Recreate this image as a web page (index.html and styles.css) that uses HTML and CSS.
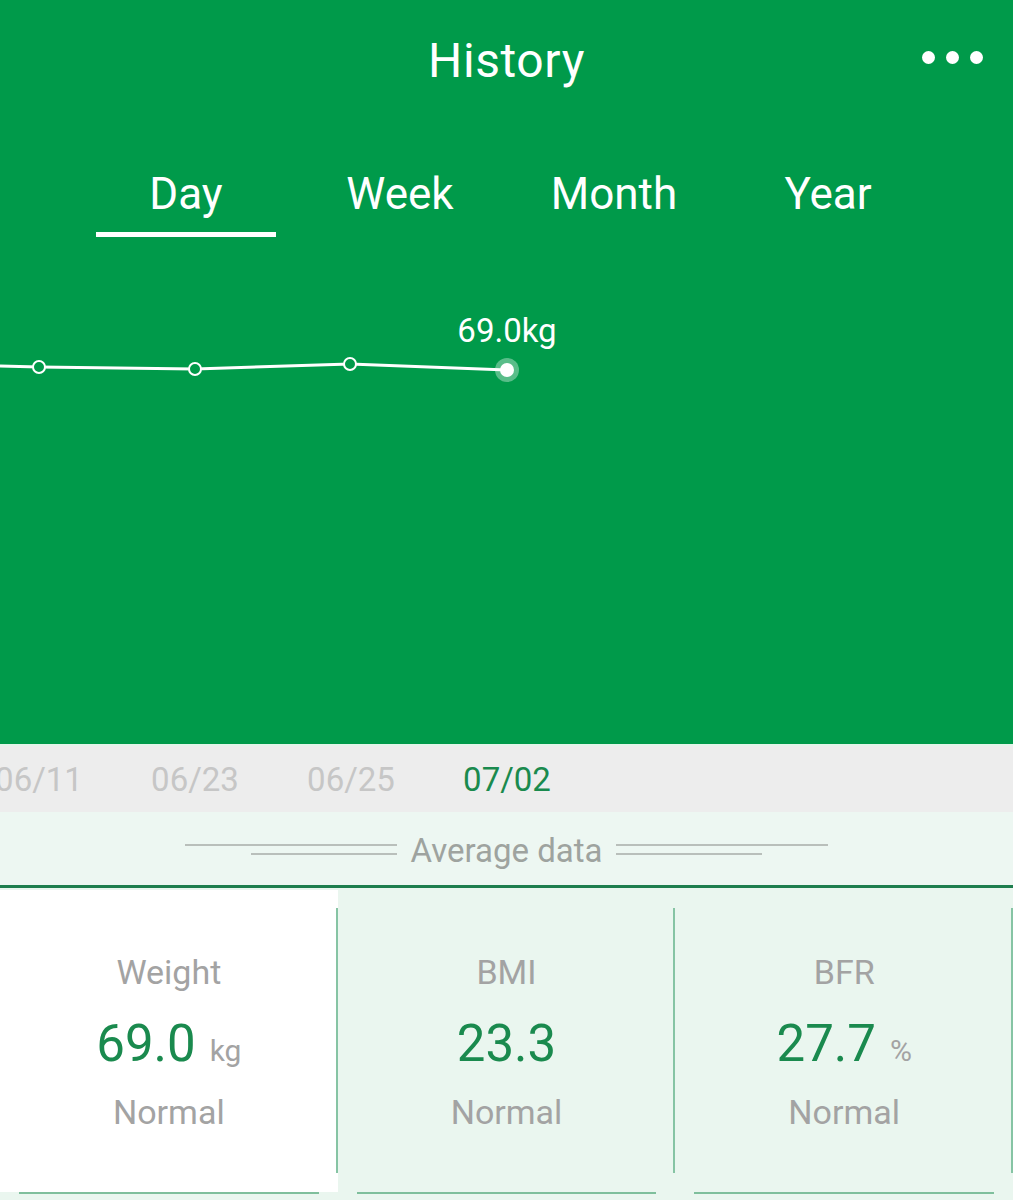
FILE: index.html
```html
<!DOCTYPE html>
<html>
<head>
<meta charset="utf-8">
<link rel="stylesheet" href="styles.css">
</head>
<body>
<div class="app">
  <header class="hero">
    <div class="titlebar">
      <h1 class="title">History</h1>
      <div class="more"><span></span><span></span><span></span></div>
    </div>
    <nav class="tabs">
      <div class="tab active"><span class="tab-label">Day</span><span class="tab-bar"></span></div>
      <div class="tab"><span class="tab-label">Week</span><span class="tab-bar"></span></div>
      <div class="tab"><span class="tab-label">Month</span><span class="tab-bar"></span></div>
      <div class="tab"><span class="tab-label">Year</span><span class="tab-bar"></span></div>
    </nav>
    <svg class="chart" width="1013" height="507" viewBox="0 0 1013 507">
      <polyline points="0,129 39,130 195,132 350,127 507,133" fill="none" stroke="#ffffff" stroke-width="3"/>
      <circle cx="39" cy="130" r="6" fill="#009a4a" stroke="#ffffff" stroke-width="2"/>
      <circle cx="195" cy="132" r="6" fill="#009a4a" stroke="#ffffff" stroke-width="2"/>
      <circle cx="350" cy="127" r="6" fill="#009a4a" stroke="#ffffff" stroke-width="2"/>
      <circle cx="507" cy="133" r="12" fill="#ffffff" fill-opacity="0.35"/>
      <circle cx="507" cy="133" r="7" fill="#ffffff"/>
      <text x="507" y="105" text-anchor="middle" class="chart-label">69.0kg</text>
    </svg>
  </header>
  <div class="dates">
    <span class="date">06/11</span>
    <span class="date">06/23</span>
    <span class="date">06/25</span>
    <span class="date current">07/02</span>
  </div>
  <div class="avg">
    <div class="rule left"><i class="long"></i><i class="short"></i></div>
    <span class="avg-label">Average data</span>
    <div class="rule right"><i class="long"></i><i class="short"></i></div>
  </div>
  <section class="cards">
    <div class="card selected">
      <div class="card-name">Weight</div>
      <div class="card-value">69.0<span class="unit">kg</span></div>
      <div class="card-status">Normal</div>
    </div>
    <div class="card">
      <div class="card-name">BMI</div>
      <div class="card-value">23.3</div>
      <div class="card-status">Normal</div>
    </div>
    <div class="card">
      <div class="card-name">BFR</div>
      <div class="card-value">27.7<span class="unit">%</span></div>
      <div class="card-status">Normal</div>
    </div>
  </section>
</div>
</body>
</html>
```

FILE: styles.css
```css
* { box-sizing: border-box; }
html, body { margin: 0; padding: 0; }
body {
  width: 1013px;
  height: 1200px;
  overflow: hidden;
  font-family: Roboto, "Noto Sans", "Liberation Sans", sans-serif;
  background: #eaf6ef;
}
.app { width: 1013px; }

.hero {
  background: #009a4a;
  height: 744px;
  position: relative;
}
.titlebar {
  height: 122px;
  display: flex;
  justify-content: center;
  align-items: center;
  position: relative;
}
.title {
  margin: 0;
  font-weight: 400;
  font-size: 48px;
  letter-spacing: 0.6px;
  color: #ffffff;
  line-height: 122px;
}
.more {
  position: absolute;
  right: 30px;
  top: 51px;
  display: flex;
  gap: 11px;
}
.more span {
  width: 13px;
  height: 13px;
  border-radius: 50%;
  background: #ffffff;
}

.tabs {
  display: flex;
  padding-left: 79px;
  height: 115px;
}
.tab {
  width: 214px;
  display: flex;
  flex-direction: column;
  align-items: center;
  padding-top: 36px;
}
.tab-label {
  font-size: 44px;
  line-height: 72px;
  color: #ffffff;
}
.tab-bar {
  margin-top: 2px;
  width: 180px;
  height: 5px;
  background: transparent;
}
.tab.active .tab-bar { background: #ffffff; }

.chart { display: block; }
.chart-label {
  font-family: Roboto, "Noto Sans", sans-serif;
  font-size: 33px;
  fill: #ffffff;
}

.dates {
  height: 68px;
  background: #ededed;
  border-top: 2px solid #e3f5ea;
  display: flex;
  align-items: center;
  margin-left: -39px;
  width: 1052px;
  overflow: hidden;
}
.date {
  width: 156px;
  text-align: center;
  font-size: 33px;
  color: #c6c6c6;
}
.date.current { color: #1a8a4e; }

.avg {
  height: 76px;
  background: #edf7f2;
  border-bottom: 3px solid #1e7e4e;
  display: flex;
  justify-content: center;
  align-items: center;
  gap: 13px;
  padding-top: 5px;
}
.avg-label {
  font-size: 33px;
  color: #9ea39f;
  line-height: 40px;
}
.rule {
  width: 212px;
  display: flex;
  flex-direction: column;
  gap: 7px;
  margin-top: -4px;
}
.rule i {
  display: block;
  height: 2px;
  background: #b9bfbb;
}
.rule.left { align-items: flex-end; }
.rule.right { align-items: flex-start; }
.rule .long { width: 212px; }
.rule .short { width: 146px; }

.cards {
  display: flex;
  height: 312px;
  padding-top: 2px;
}
.card {
  flex: 1;
  position: relative;
  display: flex;
  flex-direction: column;
  align-items: center;
  height: 302px;
  padding-top: 60px;
}
.card.selected { background: #ffffff; }
.card::after {
  content: "";
  position: absolute;
  right: 0;
  top: 18px;
  bottom: 19px;
  width: 2px;
  background: #86c4a4;
}
.card::before {
  content: "";
  position: absolute;
  left: 19px;
  right: 19px;
  bottom: -2px;
  height: 2px;
  background: #7fbf9c;
}
.card-name {
  font-size: 34px;
  color: #a3a3a3;
  line-height: 44px;
}
.card-value {
  margin-top: 10px;
  height: 80px;
  font-size: 51px;
  color: #1a8a4e;
  line-height: 80px;
}
.unit {
  font-size: 30px;
  color: #a3a3a3;
  margin-left: 14px;
}
.card-status {
  margin-top: 6px;
  font-size: 34px;
  color: #a3a3a3;
  line-height: 44px;
}
```
